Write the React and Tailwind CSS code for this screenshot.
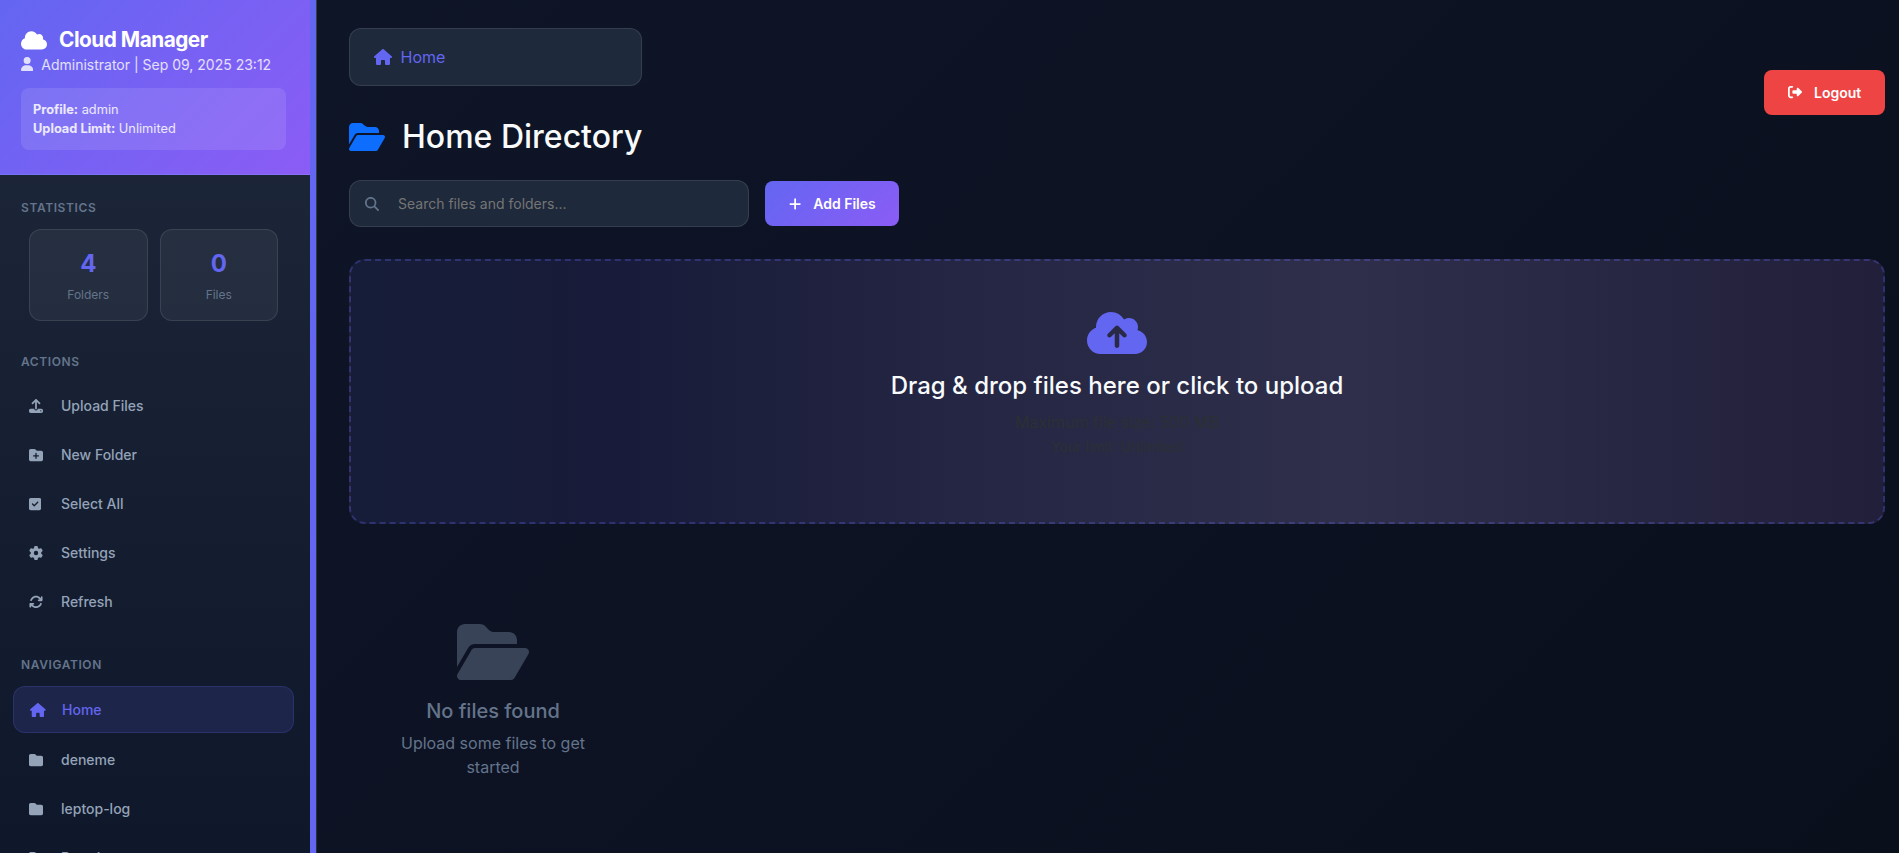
import React from "react";
import {
  FaCloud, FaUser, FaUpload, FaFolderPlus, FaSquareCheck, FaGear, FaArrowsRotate, FaHouse,
  FaFolder, FaFolderOpen, FaMagnifyingGlass, FaPlus, FaRightFromBracket, FaCloudArrowUp,
} from "react-icons/fa6";

function SectionTitle({ children }) {
  return (
    <div className="pl-[21px] text-[12px] leading-[18px] font-semibold uppercase tracking-[0.6px] text-[#64748b]">{children}</div>
  );
}

function Item({ icon: Icon, label, iconClass = "w-[14px]" }) {
  return (
    <div className="mb-1 ml-[13px] flex h-[45px] items-center pl-[16px] text-[14px] font-medium text-[#94a3b8]">
      <span className="flex w-[32px]"><Icon className={`h-[14px] ${iconClass}`} /></span>
      {label}
    </div>
  );
}

function Stat({ value, label }) {
  return (
    <div className="flex h-[92px] flex-1 flex-col items-center rounded-[12px] border border-white/10 bg-white/5 pt-[16px]">
      <div className="text-[24px] leading-[36px] font-bold text-[#6366f1]">{value}</div>
      <div className="mt-1 text-[12px] leading-[18px] text-[#64748b]">{label}</div>
    </div>
  );
}

export default function App() {
  return (
    <div className="flex h-[853px] w-full overflow-hidden bg-[linear-gradient(135deg,#0f172a_0%,#0f1629_0%,#0a0f1c_100%)] font-['Inter',sans-serif] text-[#f8fafc]">
      <aside className="flex h-full w-[317px] shrink-0 border-r border-white/10 bg-[linear-gradient(180deg,#1e293b_0%,#0f172a_100%)]">
        <div className="w-[310px] overflow-hidden">
          <header className="h-[175px] border-b border-white/10 bg-[linear-gradient(135deg,#6366f1_0%,#8b5cf6_100%)] pt-[26px] pl-[21px]">
            <div className="flex h-[28px] items-center text-[20.8px] font-bold tracking-[-0.5px] text-white">
              <FaCloud className="mr-[12px] h-[20.8px] w-[26px]" />
              Cloud Manager
            </div>
            <div className="flex h-[20px] items-center text-[14px] text-white/80">
              <FaUser className="mr-[8px] h-[14px] w-[12.25px]" />
              Administrator | Sep 09, 2025 23:12
            </div>
            <div className="mt-[14px] h-[62px] w-[265px] rounded-[8px] bg-white/10 px-3 pt-3 text-[12.8px] leading-[19px] text-white/85">
              <div><b>Profile:</b> admin</div>
              <div><b>Upload Limit:</b> Unlimited</div>
            </div>
          </header>
          <div className="mt-[24px]"><SectionTitle>Statistics</SectionTitle></div>
          <div className="mt-[12px] ml-[29px] flex w-[249px] gap-3">
            <Stat value="4" label="Folders" />
            <Stat value="0" label="Files" />
          </div>
          <div className="mt-[32px] mb-[12px]"><SectionTitle>Actions</SectionTitle></div>
          <Item icon={FaUpload} label="Upload Files" />
          <Item icon={FaFolderPlus} label="New Folder" />
          <Item icon={FaSquareCheck} label="Select All" iconClass="w-[12.25px]" />
          <Item icon={FaGear} label="Settings" />
          <Item icon={FaArrowsRotate} label="Refresh" />
          <div className="mt-[32px] mb-[12px]"><SectionTitle>Navigation</SectionTitle></div>
          <div className="mb-1 ml-[13px] flex h-[47px] w-[281px] items-center rounded-[12px] border border-[#6366f1]/20 bg-[#6366f1]/15 pl-[16px] text-[14px] font-medium text-[#6366f1]">
            <span className="flex w-[32px]"><FaHouse className="h-[14px] w-[15.75px]" /></span>
            Home
          </div>
          <Item icon={FaFolder} label="deneme" />
          <Item icon={FaFolder} label="leptop-log" />
          <Item icon={FaFolder} label="Portainer" />
        </div>
        <div className="w-[6px] bg-[#6366f1]" />
      </aside>

      <main className="min-w-0 flex-1 pt-[28px] pr-[14px] pl-[32px]">
        <div className="flex items-center justify-between">
          <div className="w-[293px]">
            <nav className="flex h-[58px] items-center rounded-[12px] border border-white/10 bg-[#1e293b] pl-[24px] text-[16px] text-[#6366f1]">
              <FaHouse className="mr-[8.5px] h-[16px] w-[18px]" />
              Home
            </nav>
            <h1 className="mt-[31px] flex h-[39px] items-center text-[32px] font-medium whitespace-nowrap">
              <FaFolderOpen className="mr-[17px] h-[32px] w-[36px] shrink-0 text-[#0d6efd]" />
              Home Directory
            </h1>
          </div>
          <button className="flex h-[45px] w-[121px] items-center rounded-[8px] bg-[#ef4444] pl-[24px] text-[14px] font-semibold text-white">
            <FaRightFromBracket className="mr-[12px] h-[14px] w-[14px]" />
            Logout
          </button>
        </div>

        <div className="mt-[24px] flex items-center gap-4">
          <div className="flex h-[47px] w-[400px] items-center rounded-[12px] border border-white/10 bg-[#1e293b] pl-[15px] text-[14px] text-[#757575]">
            <FaMagnifyingGlass className="mr-[19px] h-[14px] w-[14px] text-[#64748b]" />
            Search files and folders...
          </div>
          <button className="flex h-[45px] w-[134px] items-center rounded-[8px] bg-[linear-gradient(135deg,#6366f1_0%,#8b5cf6_100%)] pl-[24px] text-[14px] font-semibold text-white">
            <FaPlus className="mr-[12px] h-[14px] w-[12.25px]" />
            Add Files
          </button>
        </div>

        <section className="mt-[32px] flex h-[265px] flex-col items-center rounded-[16px] border-2 border-dashed border-[#6366f1]/30 bg-[linear-gradient(90deg,#161d39_0%,#181b39_18%,#242643_40%,#2f2f4b_65%,#211f3a_100%)] pt-[48px]">
          <FaCloudArrowUp className="h-[48px] w-[60px] text-[#6366f1]" />
          <div className="mt-[14px] text-[24px] leading-[29px] font-medium">Drag &amp; drop files here or click to upload</div>
          <div className="mt-[10px] text-[16px] leading-[24px] text-[#2b3035]">Maximum file size: 500 MB</div>
          <div className="mt-px text-[14px] leading-[24px] text-[#2b3035]">Your limit: Unlimited</div>
        </section>

        <div className="mt-[96px] flex w-[288px] flex-col items-center text-center text-[#64748b]">
          <FaFolderOpen className="h-[64px] w-[72px] opacity-50" />
          <div className="mt-[15px] text-[20px] leading-[24px] font-medium">No files found</div>
          <p className="mt-[8px] w-[200px] text-[16px] leading-[24px]">Upload some files to get started</p>
        </div>
      </main>
    </div>
  );
}
